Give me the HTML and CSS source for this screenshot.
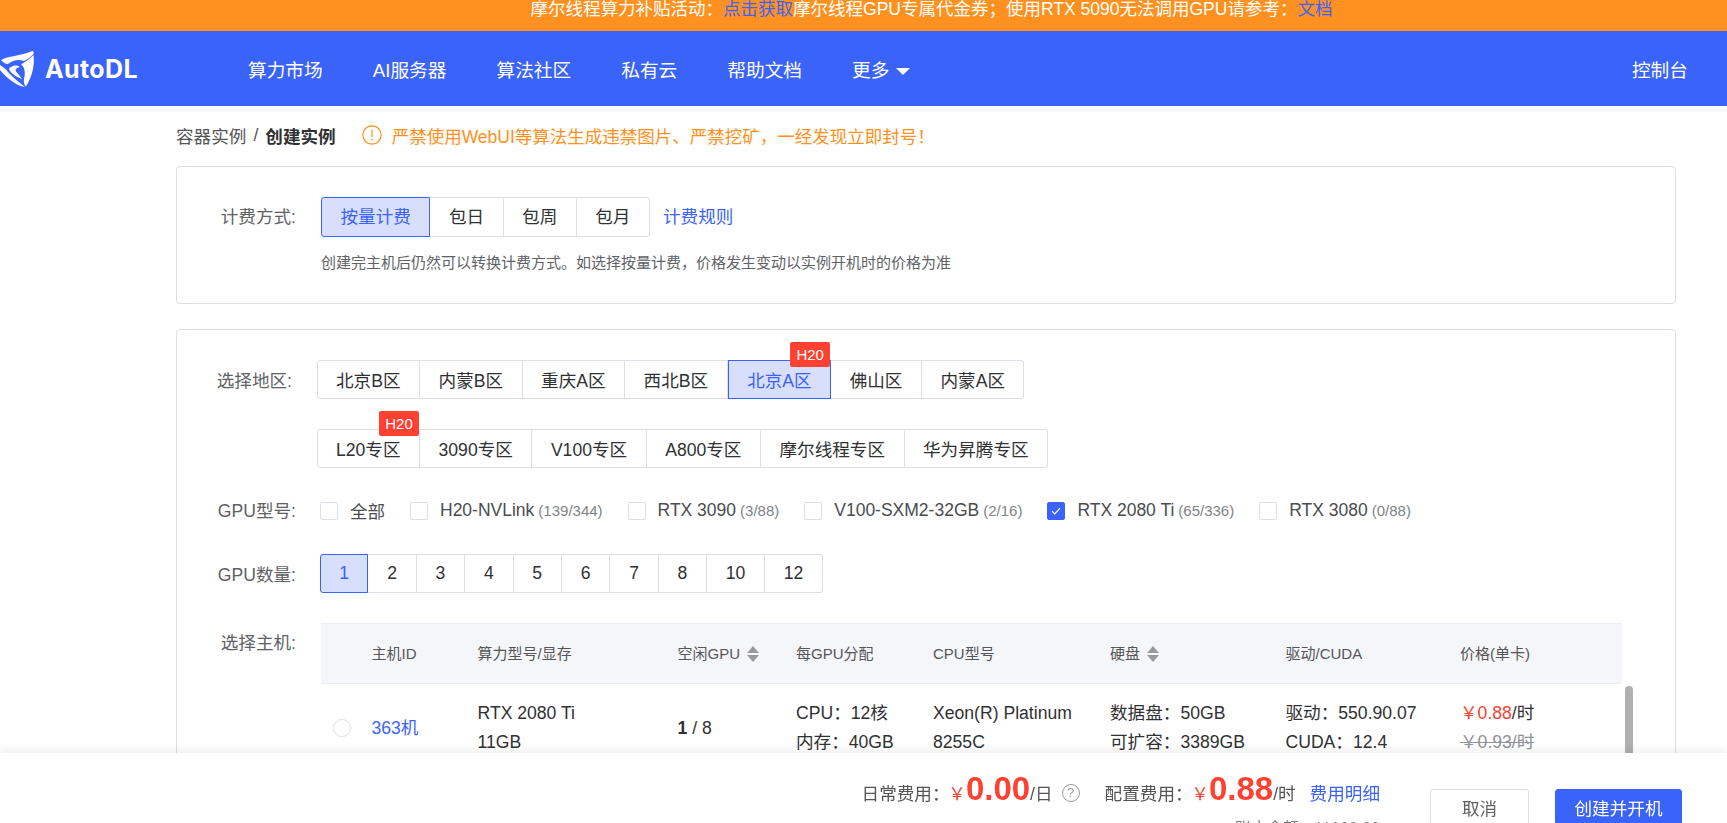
FILE: index.html
```html
<!DOCTYPE html>
<html lang="zh-CN">
<head>
  <meta charset="UTF-8" />
  <title>AutoDL</title>
  <link rel="stylesheet" href="styles.css">
</head>
<body>

  <!-- Notice -->
  <div class="notice">
    摩尔线程算力补贴活动：<a>点击获取</a>摩尔线程GPU专属代金券；使用RTX 5090无法调用GPU请参考：<a>文档</a>
  </div>

  <!-- Header -->
  <header class="header">
    <div class="logo">
      <svg class="logo-icon" viewBox="0 0 34 36" width="34" height="36">
        <path fill="#fff" d="M1 9 C8 5 20 5 32.500 0 C33.500 0 34 1 33.500 3 C31 6 28 8 24 10 C19 8 13 9 8 13 C5 13 3 11 1 9 Z"/>
        <path fill="#fff" d="M33.500 4 C35 14 32 26 26 35.500 C24 34 23.500 31 24 28 C25.500 22 25 16 21 13.500 C25 11 30 8 33.500 4 Z"/>
        <path fill="#fff" d="M0 14 C4 17 6 18 9 22 C13 27 19 31 25 36 C16 35 6 26 0 19 Z"/>
        <path fill="#fff" d="M10 16.500 C14 13.500 18 14 20 16 C16.500 16.500 15 18.500 16 20.500 C18 23 20 25 22 28 C17 26 12 23 10 20 C9 18.500 9 17.500 10 16.500 Z"/>
      </svg>
      <span class="logo-text">AutoDL</span>
    </div>
    <nav class="nav">
      <a>算力市场</a>
      <a>AI服务器</a>
      <a>算法社区</a>
      <a>私有云</a>
      <a>帮助文档</a>
      <a>更多<i class="caret"></i></a>
    </nav>
    <a class="console">控制台</a>
  </header>

  <main class="main">
    <div class="crumbs">
      <span class="crumb">容器实例</span>
      <span class="crumb-sep">/</span>
      <b class="crumb-now">创建实例</b>
      <span class="warn">
        <svg viewBox="0 0 20 20" width="20" height="20"><circle cx="10" cy="10" r="9.200" fill="none" stroke="#ff9120" stroke-width="1.200"/><path d="M10 4.500v7.500M10 13.800v1.600" stroke="#ff9120" stroke-width="1.200" fill="none"/></svg>
        严禁使用WebUI等算法生成违禁图片、严禁挖矿，一经发现立即封号！
      </span>
    </div>

    <section class="card card-bill">
      <div class="row">
        <label class="row-label">计费方式:</label>
        <div class="btn-group bill">
          <span class="opt on">按量计费</span><span class="opt">包日</span><span class="opt">包周</span><span class="opt">包月</span>
        </div>
        <a class="rule-link">计费规则</a>
      </div>
      <p class="hint">创建完主机后仍然可以转换计费方式。如选择按量计费，价格发生变动以实例开机时的价格为准</p>
    </section>

    <section class="card card-form">
      <div class="row row-region">
        <label class="row-label">选择地区:</label>
        <div class="regions">
          <div class="btn-group region">
            <span class="opt">北京B区</span><span class="opt">内蒙B区</span><span class="opt">重庆A区</span><span class="opt">西北B区</span><span class="opt on">北京A区<em class="badge">H20</em></span><span class="opt">佛山区</span><span class="opt">内蒙A区</span>
          </div>
          <div class="btn-group region">
            <span class="opt">L20专区<em class="badge">H20</em></span><span class="opt">3090专区</span><span class="opt">V100专区</span><span class="opt">A800专区</span><span class="opt">摩尔线程专区</span><span class="opt">华为昇腾专区</span>
          </div>
        </div>
      </div>

      <div class="row row-gpu">
        <label class="row-label">GPU型号:</label>
        <div class="checks">
          <span class="check"><i class="box"></i>全部</span>
          <span class="check"><i class="box"></i>H20-NVLink <small>(139/344)</small></span>
          <span class="check"><i class="box"></i>RTX 3090 <small>(3/88)</small></span>
          <span class="check"><i class="box"></i>V100-SXM2-32GB <small>(2/16)</small></span>
          <span class="check"><i class="box on"><svg viewBox="0 0 16 16" width="16" height="16"><path d="M4 8.200l2.800 2.800L12 5.200" fill="none" stroke="#fff" stroke-width="1.200"/></svg></i>RTX 2080 Ti <small>(65/336)</small></span>
          <span class="check"><i class="box"></i>RTX 3080 <small>(0/88)</small></span>
        </div>
      </div>

      <div class="row row-count">
        <label class="row-label">GPU数量:</label>
        <div class="btn-group count">
          <span class="opt on">1</span><span class="opt">2</span><span class="opt">3</span><span class="opt">4</span><span class="opt">5</span><span class="opt">6</span><span class="opt">7</span><span class="opt">8</span><span class="opt wide">10</span><span class="opt wide">12</span>
        </div>
      </div>

      <div class="row row-host">
        <label class="row-label">选择主机:</label>
        <div class="table-wrap">
          <table class="hosts">
            <thead>
              <tr>
                <th class="c-id">主机ID</th>
                <th class="c-model">算力型号/显存</th>
                <th class="c-free">空闲GPU<i class="sort"></i></th>
                <th class="c-alloc">每GPU分配</th>
                <th class="c-cpu">CPU型号</th>
                <th class="c-disk">硬盘<i class="sort"></i></th>
                <th class="c-driver">驱动/CUDA</th>
                <th class="c-price">价格(单卡)</th>
              </tr>
            </thead>
            <tbody>
              <tr>
                <td class="c-host"><i class="radio"></i><a>363机</a></td>
                <td>RTX 2080 Ti<br>11GB</td>
                <td><b>1</b> / 8</td>
                <td>CPU：12核<br>内存：40GB</td>
                <td>Xeon(R) Platinum<br>8255C</td>
                <td>数据盘：50GB<br>可扩容：3389GB</td>
                <td>驱动：550.90.07<br>CUDA：12.4</td>
                <td><span class="red">￥0.88</span>/时<br><s>￥0.93/时</s></td>
              </tr>
            </tbody>
          </table>
          <div class="scroll-thumb"></div>
        </div>
      </div>
    </section>
  </main>

  <!-- Bottom bar -->
  <footer class="footer">
    <div class="costs">
      <div class="cost-line">
        <span class="cost-name">日常费用：</span><span class="yen">￥</span><b class="amount">0.00</b><span class="unit">/日</span>
        <i class="help">?</i>
        <span class="cost-name cost-second">配置费用：</span><span class="yen">￥</span><b class="amount">0.88</b><span class="unit">/时</span>
        <a class="detail">费用明细</a>
      </div>
      <div class="balance">账户余额：￥100.00</div>
    </div>
    <div class="actions">
      <button class="btn-cancel">取消</button>
      <button class="btn-create">创建并开机</button>
    </div>
  </footer>

</body>
</html>
```

FILE: styles.css
```css
* {
  box-sizing: border-box;
}

html, body {
  height: 100%;
}

body {
  margin: 0;
  font-family: "Liberation Sans", "Noto Sans CJK SC", sans-serif;
  font-size: 17.6px;
  color: #303133;
  background: #fff;
  overflow: hidden;
}

a {
  color: #3b63f9;
  cursor: pointer;
}

.notice {
  height: 31px;
  padding-left: 136px;
  background: #ff9120;
  color: #fff;
  font-size: 17.5px;
  line-height: 18px;
  text-align: center;
}

.header {
  display: flex;
  align-items: center;
  height: 75px;
  background: #3a63f9;
  color: #fff;
}

.logo {
  display: flex;
  align-items: center;
  width: 248px;
}

.logo-text {
  margin-left: 11px;
  font-family: "Inter", sans-serif;
  font-size: 25px;
  font-weight: 700;
  letter-spacing: 0.4px;
}

.nav {
  display: flex;
  gap: 50px;
  font-size: 18.7px;
}

.nav a, .console {
  color: #fff;
}

.caret {
  display: inline-block;
  margin-left: 7px;
  border-left: 7px solid transparent;
  border-right: 7px solid transparent;
  border-top: 7px solid #fff;
  vertical-align: 2px;
}

.console {
  margin-left: auto;
  margin-right: 39px;
  font-size: 18.7px;
}

.main {
  padding: 0 51px 0 176px;
}

.crumbs {
  display: flex;
  align-items: center;
  height: 60px;
  padding-bottom: 2px;
}

.crumb {
  color: #555;
}

.crumb-sep {
  margin: 0 7px;
  color: #555;
}

.crumb-now {
  color: #303133;
}

.warn {
  display: flex;
  align-items: center;
  gap: 10px;
  margin-left: 26px;
  color: #ff9120;
  font-size: 17.5px;
}

.card {
  border: 1px solid #dcdfe6;
  border-radius: 4px;
}

.card-bill {
  height: 138px;
  padding-top: 30px;
}

.card-form {
  margin-top: 25px;
  height: 500px;
  padding-top: 30px;
}

.row {
  display: flex;
}

.row-label {
  width: 119px;
  flex: none;
  color: #606266;
  line-height: 40px;
  text-align: right;
  white-space: nowrap;
}

.btn-group {
  display: inline-flex;
  height: 40px;
}

.opt {
  position: relative;
  display: flex;
  align-items: center;
  justify-content: center;
  border: 1px solid #dcdfe6;
  border-left-width: 0;
  background: #fff;
  color: #303133;
  white-space: nowrap;
}

.opt:first-child {
  border-left-width: 1px;
  border-radius: 3px 0 0 3px;
}

.opt:last-child {
  border-radius: 0 3px 3px 0;
}

.opt.on {
  border: 1px solid #3b63f9;
  background: #d8dffd;
  color: #3b63f9;
}

.bill {
  margin-left: 25px;
}

.bill .opt {
  width: 73.2px;
  padding-bottom: 3px;
}

.bill .opt.on {
  width: 109.4px;
}

.rule-link {
  margin-left: 13px;
  line-height: 40px;
}

.hint {
  margin: 15px 0 0 144px;
  color: #606266;
  font-size: 15px;
  line-height: 22px;
}

.row-region .row-label {
  width: 115px;
  line-height: 42px;
}

.regions {
  display: flex;
  flex-direction: column;
  align-items: flex-start;
  gap: 30px;
  margin-left: 24.5px;
}

.region {
  height: 39px;
}

.region .opt {
  padding: 0 18.5px 1px;
}

.badge {
  position: absolute;
  top: -19px;
  right: 0;
  width: 40px;
  height: 25px;
  border-radius: 2px;
  background: #ff4131;
  color: #fff;
  font-size: 15px;
  font-style: normal;
  line-height: 25px;
  text-align: center;
}

.row-gpu {
  align-items: center;
  margin-top: 23px;
  height: 40px;
}

.checks {
  display: flex;
  gap: 25px;
  margin: 0 0 2px 24px;
  font-size: 17.5px;
}

.check {
  display: flex;
  align-items: center;
  color: #4a4c50;
  white-space: nowrap;
}

.check small {
  margin-left: 4px;
  color: #808388;
  font-size: 15px;
}

.box {
  display: flex;
  flex: none;
  width: 18px;
  height: 18px;
  margin: 2px 12px 0 0;
  border: 1px solid #dcdfe6;
  border-radius: 2px;
}

.box.on {
  border-color: #3b63f9;
  background: #3b63f9;
}

.row-count {
  margin-top: 23px;
}

.row-count .row-label {
  line-height: 42px;
}

.count {
  margin-left: 24px;
  height: 39px;
}

.count .opt {
  width: 48.4px;
}

.count .opt.wide {
  width: 58px;
}

.row-host {
  margin-top: 27px;
}

.table-wrap {
  position: relative;
  width: 1301px;
  margin-left: 25px;
}

.hosts {
  width: 1301px;
  border-collapse: collapse;
  table-layout: fixed;
}

.hosts th {
  height: 60px;
  padding: 0 0 2px;
  background: #f5f6fa;
  border-top: 1px solid #ebeef5;
  border-bottom: 1px solid #ebeef5;
  color: #555;
  font-size: 15px;
  font-weight: 400;
  text-align: left;
}

.hosts td {
  padding: 15px 0;
  color: #303133;
  line-height: 29px;
  vertical-align: middle;
}

.hosts .c-id { width: 156.5px; padding-left: 50.5px; }
.c-model { width: 200px; }
.c-free { width: 118.5px; }
.c-alloc { width: 137px; }
.c-cpu { width: 177px; }
.c-disk { width: 175.5px; }
.c-driver { width: 174.5px; }

.sort {
  position: relative;
  display: inline-block;
  width: 12px;
  height: 16px;
  margin-left: 7px;
  vertical-align: -3px;
}

.sort::before, .sort::after {
  content: "";
  position: absolute;
  left: 0;
  border-left: 6px solid transparent;
  border-right: 6px solid transparent;
}

.sort::before {
  top: 0;
  border-bottom: 7px solid #999;
}

.sort::after {
  bottom: 0;
  border-top: 7px solid #999;
}

.hosts .c-host {
  padding-left: 12px;
}

.radio {
  display: inline-block;
  width: 18px;
  height: 18px;
  margin-right: 20.5px;
  border: 1px solid #dcdfe6;
  border-radius: 50%;
  vertical-align: -3px;
}

.red {
  color: #ff4131;
}

s {
  color: #909399;
}

.scroll-thumb {
  position: absolute;
  top: 63px;
  right: -11px;
  width: 8px;
  height: 120px;
  border-radius: 4px;
  background: #b0b0b0;
}

.footer {
  position: fixed;
  left: 0;
  right: 0;
  bottom: 0;
  display: flex;
  justify-content: flex-end;
  height: 70px;
  background: #fff;
  box-shadow: 0 -4px 8px rgba(0, 0, 0, 0.06);
}

.costs {
  margin-right: 50px;
  padding-top: 16px;
}

.cost-line {
  display: flex;
  align-items: baseline;
  height: 40px;
  line-height: 40px;
  white-space: nowrap;
}

.cost-name {
  color: #555;
}

.cost-second {
  margin-left: 25px;
}

.yen {
  margin-left: -1.3px;
  color: #ff4131;
}

.amount {
  color: #ff4131;
  font-size: 33px;
}

.unit {
  color: #555;
}

.help {
  align-self: center;
  width: 18px;
  height: 18px;
  margin: 8px 0 0 9px;
  border: 1px solid #999;
  border-radius: 50%;
  color: #999;
  font-size: 13px;
  font-style: normal;
  line-height: 16px;
  text-align: center;
}

.detail {
  margin-left: 14px;
}

.balance {
  margin-top: 5px;
  color: #777;
  font-size: 16px;
  line-height: 30px;
  text-align: right;
}

.actions {
  display: flex;
  gap: 26px;
  margin-right: 45px;
  padding-top: 36px;
}

.actions button {
  height: 36px;
  border-radius: 3px;
  font-family: inherit;
  font-size: 17.6px;
}

.btn-cancel {
  width: 99px;
  border: 1px solid #dcdfe6;
  background: #fff;
  color: #606266;
}

.btn-create {
  width: 127px;
  border: 1px solid #3a63f9;
  background: #3a63f9;
  color: #fff;
}
```
